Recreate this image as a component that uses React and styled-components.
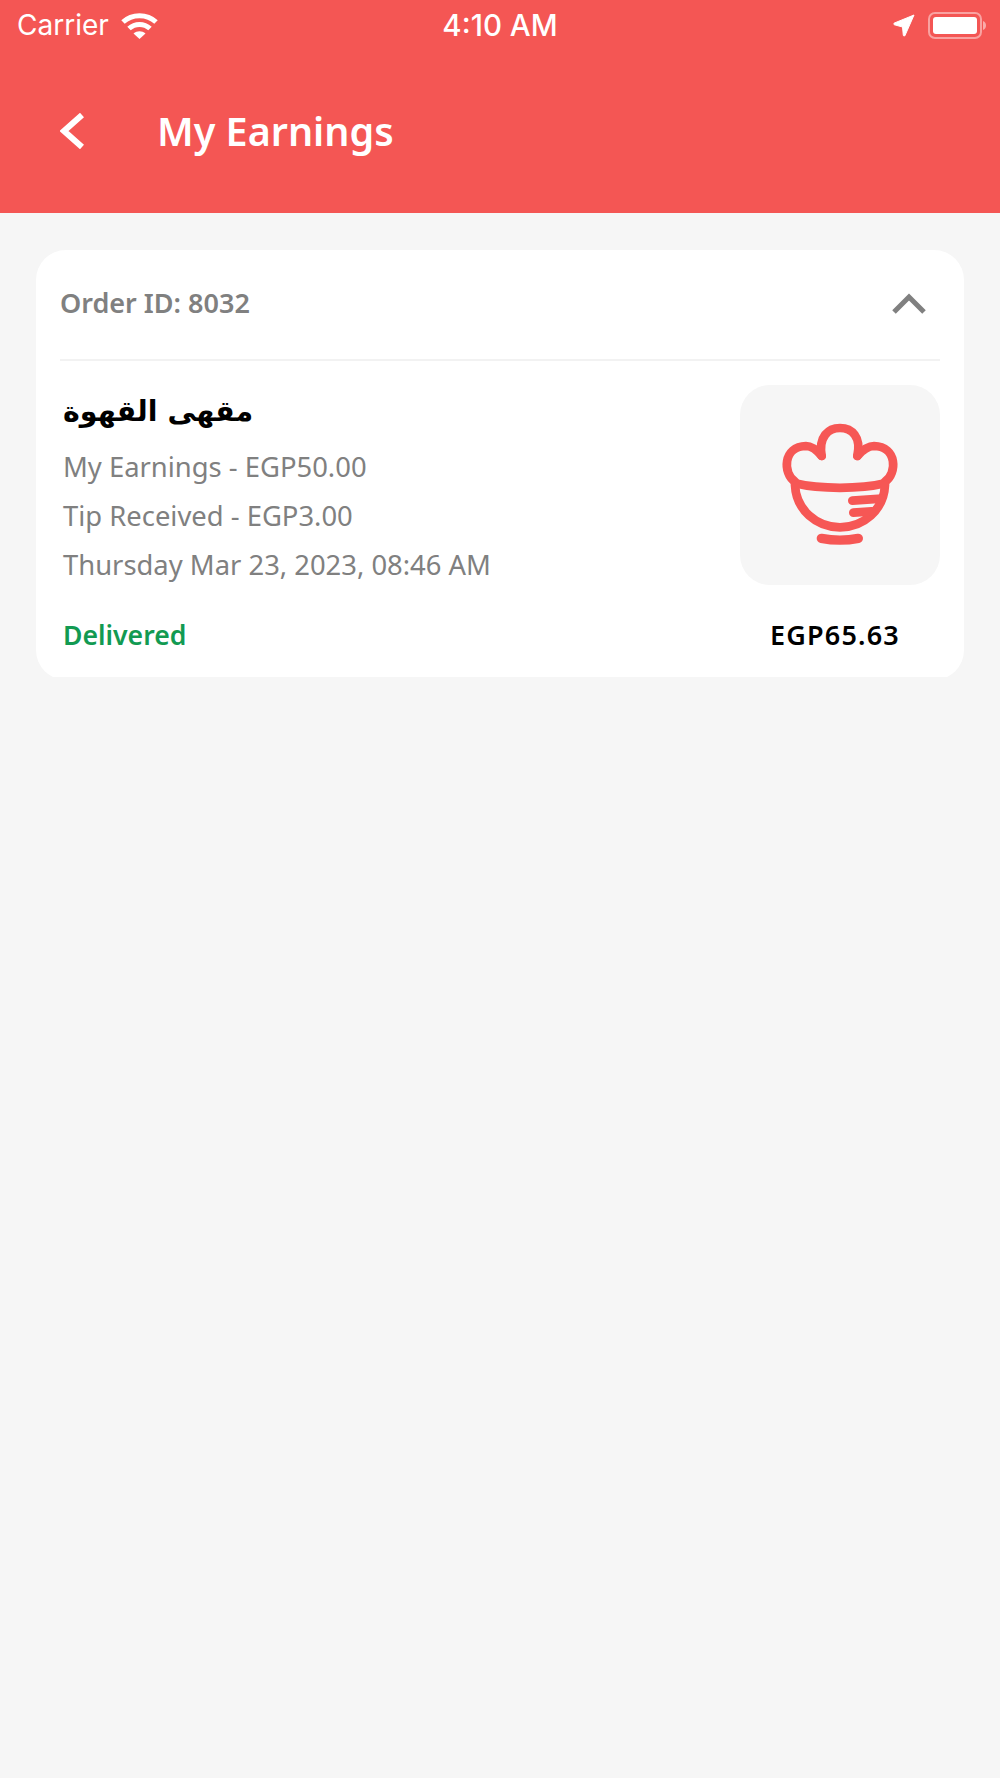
import React from "react";
import styled, {createGlobalStyle} from "styled-components";

const GlobalStyle = createGlobalStyle`
  html, body {
    margin: 0;
    padding: 0;
    background: #f6f6f6;
  }
  body {
    font-family: "Noto Sans", "DejaVu Sans", sans-serif;
  }
`

const Page = styled.div`
  width: 1000px;
  height: 1778px;
  background: #f6f6f6;
  overflow: hidden;
`

const Header = styled.header`
  height: 213px;
  background: #f45654;
  color: #fff;
`

const StatusBar = styled.div`
  height: 50px;
  display: grid;
  grid-template-columns: 1fr auto 1fr;
  align-items: center;
  padding: 0 13px;
  font-family: Inter, "Liberation Sans", sans-serif;
`

const StatusLeft = styled.div`
  display: flex;
  align-items: center;
  gap: 12px;
  padding-left: 4px;
  font-size: 28px;
`

const Clock = styled.div`
  font-size: 29.5px;
  font-weight: 500;
`

const StatusRight = styled.div`
  display: flex;
  align-items: center;
  justify-content: flex-end;
  gap: 13px;
`

const TitleBar = styled.div`
  display: flex;
  align-items: center;
  height: 106px;
  padding-left: 60px;
  margin-top: 28px;
`

const BackButton = styled.svg`
  width: 24px;
  height: 36px;
  margin-right: 73px;
`

const Title = styled.h1`
  margin: 0;
  font-size: 39.5px;
  font-weight: 600;
`

const Content = styled.main`
  padding: 37px 36px 0;
`

const CardClip = styled.div`
  height: 427px;
  overflow: hidden;
`

const Card = styled.section`
  height: 430px;
  background: #fff;
  border-radius: 30px;
  padding: 0 24px;
  box-sizing: border-box;
`

const CardHead = styled.div`
  height: 105px;
  padding: 0 14px 4px 0;
  display: flex;
  align-items: center;
  justify-content: space-between;
  border-bottom: 2px solid #f2f2f2;
`

const OrderId = styled.div`
  font-size: 27px;
  font-weight: 600;
  color: #808080;
`

const Chevron = styled.svg`
  width: 34px;
  height: 22px;
`

const CardBody = styled.div`
  display: flex;
  justify-content: space-between;
  padding-top: 24px;
`

const Info = styled.div`
  padding: 4px 0 0 3px;
`

const ShopName = styled.div`
  font-family: "DejaVu Sans", sans-serif;
  font-size: 28.5px;
  font-weight: 700;
  line-height: 46px;
  color: #000;
`

const Detail = styled.div`
  font-size: 27.4px;
  line-height: 49px;
  color: #808080;
  margin-top: ${props => props.first ? "7px" : "0"};
`

const Thumb = styled.div`
  width: 200px;
  height: 200px;
  border-radius: 30px;
  background: #f6f6f6;
`

const CardFoot = styled.div`
  display: flex;
  justify-content: space-between;
  align-items: center;
  margin-top: 27px;
  padding: 0 40px 0 3px;
`

const Status = styled.div`
  font-size: 26.6px;
  font-weight: 600;
  color: #129a52;
`

const Total = styled.div`
  font-size: 27px;
  font-weight: 600;
  letter-spacing: 1.2px;
  color: #000;
`

function Wifi() {
    return (
        <svg width="37" height="27" viewBox="0 0 37 27" fill="none" stroke="#fff" strokeWidth="5">
            <path d="M2 10C11 1.5 26 1.5 35 10"/>
            <path d="M8 16.5C14 11 23 11 29 16.5"/>
            <path d="M18.5 27L12.5 21.5C16 18.5 21 18.5 24.5 21.5Z" fill="#fff" stroke="none"/>
        </svg>
    )
}

function Battery() {
    return (
        <svg width="59" height="27" viewBox="0 0 59 27">
            <rect x="1" y="1" width="52" height="25" rx="6" fill="none" stroke="#fff" strokeOpacity="0.45" strokeWidth="2"/>
            <rect x="5" y="5" width="44" height="17" rx="3" fill="#fff"/>
            <path d="M55 9C59 10 59 17 55 18Z" fill="#fff" fillOpacity="0.5"/>
        </svg>
    )
}

function Location() {
    return (
        <svg width="22" height="23" viewBox="0 0 22 23" fill="#fff">
            <path d="M21 1L12 21.5C11.6 22.4 10.4 22.2 10.3 21.2L9.5 13L1.5 10.8C.6 10.5 .5 9.4 1.4 9Z" stroke="#fff" strokeWidth="1" strokeLinejoin="round"/>
        </svg>
    )
}

// coordinates are the 3x crop of the thumb, hence the big viewBox
function ChefBowl() {
    return (
        <svg width="200" height="200" viewBox="60 45 600 600" fill="none" stroke="#f65755" strokeWidth="26" strokeLinecap="round" strokeLinejoin="round">
            <path d="M225 335C188 310 188 230 258 228C275 228 290 240 305 258"/>
            <path d="M305 258C295 200 325 174 360 174C395 174 425 200 412 258"/>
            <path d="M412 258C428 240 445 228 462 228C532 230 532 310 495 335"/>
            <path d="M225 340C300 358 420 358 495 340"/>
            <path d="M225 345C228 420 290 472 360 472C430 472 492 420 495 345"/>
            <path d="M397 392L485 386M400 428L455 424"/>
            <path d="M304 505C340 512 380 512 415 505" strokeWidth="28"/>
        </svg>
    )
}

export default function App() {
    return (
        <Page>
            <GlobalStyle/>
            <Header>
                <StatusBar>
                    <StatusLeft>Carrier <Wifi/></StatusLeft>
                    <Clock>4:10 AM</Clock>
                    <StatusRight><Location/><Battery/></StatusRight>
                </StatusBar>
                <TitleBar>
                    <BackButton viewBox="0 0 24 36" fill="none" stroke="#fff" strokeWidth="6">
                        <path d="M22 2L4 18L22 34"/>
                    </BackButton>
                    <Title>My Earnings</Title>
                </TitleBar>
            </Header>
            <Content>
                <CardClip>
                    <Card>
                        <CardHead>
                            <OrderId>Order ID: 8032</OrderId>
                            <Chevron viewBox="0 0 34 22" fill="none" stroke="#808080" strokeWidth="5">
                                <path d="M2 20L17 5L32 20"/>
                            </Chevron>
                        </CardHead>
                        <CardBody>
                            <Info>
                                <ShopName>مقهى القهوة</ShopName>
                                <Detail first>My Earnings - EGP50.00</Detail>
                                <Detail>Tip Received - EGP3.00</Detail>
                                <Detail>Thursday Mar 23, 2023, 08:46 AM</Detail>
                            </Info>
                            <Thumb><ChefBowl/></Thumb>
                        </CardBody>
                        <CardFoot>
                            <Status>Delivered</Status>
                            <Total>EGP65.63</Total>
                        </CardFoot>
                    </Card>
                </CardClip>
            </Content>
        </Page>
    )
}
